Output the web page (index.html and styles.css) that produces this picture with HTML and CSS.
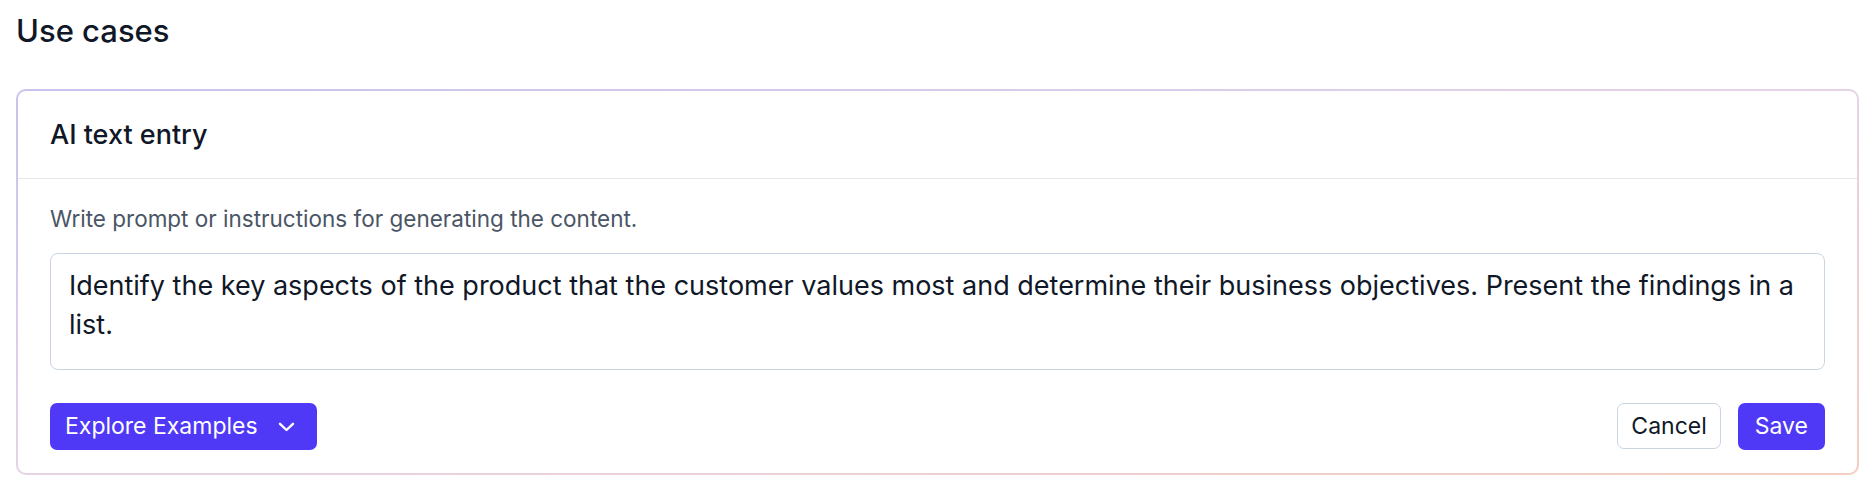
FILE: index.html
```html
<!DOCTYPE html>
<html lang="en">
<head>
<meta charset="utf-8">
<title>Use cases</title>
<link rel="stylesheet" href="styles.css">
</head>
<body>
<main class="page">
  <h1 class="page-title">Use cases</h1>
  <section class="card">
    <header class="card-header">
      <h2 class="card-title">AI text entry</h2>
    </header>
    <div class="card-body">
      <label class="field-label" for="prompt">Write prompt or instructions for generating the content.</label>
      <textarea id="prompt" class="prompt">Identify the key aspects of the product that the customer values most and determine their business objectives. Present the findings in a list.</textarea>
      <div class="actions">
        <button class="btn btn-primary btn-explore" type="button">
          <span>Explore Examples</span>
          <svg class="chevron" width="17" height="10" viewBox="0 0 17 10" fill="none" aria-hidden="true">
            <path d="M2 1.8 L8.5 8 L15 1.8" stroke="currentColor" stroke-width="2.4" stroke-linecap="round" stroke-linejoin="round"/>
          </svg>
        </button>
        <div class="actions-right">
          <button class="btn btn-outline" type="button">Cancel</button>
          <button class="btn btn-primary btn-save" type="button">Save</button>
        </div>
      </div>
    </div>
  </section>
</main>
</body>
</html>
```

FILE: styles.css
```css
* {
  box-sizing: border-box;
}

html, body {
  margin: 0;
  padding: 0;
  background: #ffffff;
}

body {
  font-family: Inter, "Noto Sans", "Liberation Sans", sans-serif;
  color: #101828;
}

.page {
  padding: 13px 15px 0 16px;
}

.page-title {
  margin: 0 0 40px 0;
  font-size: 31px;
  line-height: 36px;
  font-weight: 500;
  color: #101828;
}

.card {
  border: 2px solid transparent;
  border-radius: 10px;
  background:
    linear-gradient(#ffffff, #ffffff) padding-box,
    linear-gradient(to bottom right, #c9c2ef, #e6d3e6 50%, #f3cdbf) border-box;
}

.card-header {
  height: 88px;
  display: flex;
  align-items: center;
  padding: 0 32px;
  border-bottom: 1.5px solid #e5e7eb;
}

.card-title {
  margin: 0;
  font-size: 27px;
  line-height: 32px;
  font-weight: 500;
  color: #101828;
}

.card-body {
  padding: 25px 32px 23px 32px;
  display: flex;
  flex-direction: column;
}

.field-label {
  font-size: 22.5px;
  line-height: 30px;
  color: #4a5565;
  margin-bottom: 18.5px;
}

.prompt {
  display: block;
  width: 100%;
  height: 117px;
  resize: none;
  border: 1.5px solid #cad5e2;
  border-radius: 8px;
  padding: 12px 12px 16px 18px;
  font-family: inherit;
  font-size: 27px;
  line-height: 39px;
  color: #101828;
  background: #ffffff;
  outline: none;
  overflow: hidden;
}

.actions {
  margin-top: 33px;
  display: flex;
  align-items: center;
  justify-content: space-between;
}

.actions-right {
  display: flex;
  align-items: center;
  gap: 17px;
}

.btn {
  height: 47px;
  border-radius: 7px;
  font-family: inherit;
  font-size: 23px;
  line-height: 1;
  display: inline-flex;
  align-items: center;
  cursor: pointer;
}

.btn-primary {
  background: #4f39f6;
  color: #ffffff;
  border: none;
}

.btn-explore {
  padding: 0 22px 0 15px;
  gap: 20px;
}

.chevron {
  display: block;
  margin-top: 2px;
}

.btn-outline {
  background: #ffffff;
  color: #101828;
  border: 1.5px solid #cad5e2;
  padding: 0 13px;
  height: 46px;
}

.btn-save {
  padding: 0 17px;
}
```
